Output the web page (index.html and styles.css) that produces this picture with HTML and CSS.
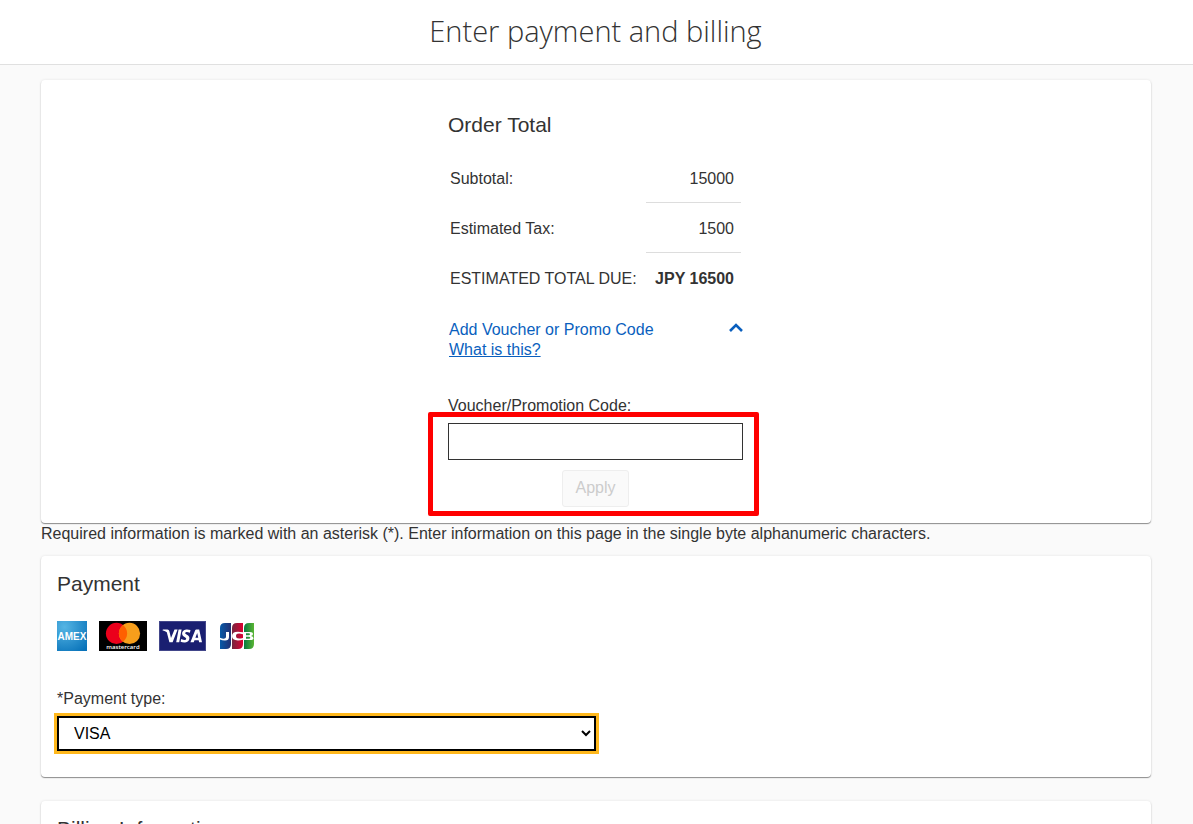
FILE: index.html
```html
<!DOCTYPE html>
<html lang="en">
<head>
<meta charset="utf-8">
<meta name="viewport" content="width=device-width, initial-scale=1">
<title>Enter payment and billing</title>
<link rel="stylesheet" href="styles.css">
</head>
<body>
<header class="page-header">
  <h1 class="page-title">Enter payment and billing</h1>
</header>
<main class="content">
  <section class="card order">
    <div class="order-column">
      <h2 class="heading">Order Total</h2>
      <table class="totals">
        <tbody>
          <tr><th scope="row">Subtotal:</th><td>15000</td></tr>
          <tr><th scope="row">Estimated Tax:</th><td>1500</td></tr>
          <tr class="due"><th scope="row">ESTIMATED TOTAL DUE:</th><td>JPY 16500</td></tr>
        </tbody>
      </table>
      <button class="voucher-toggle" type="button" aria-expanded="true">
        <span>Add Voucher or Promo Code</span>
        <svg class="chevron" width="14" height="9" viewBox="0 0 14 9" aria-hidden="true"><path d="M1 8 L7 2 L13 8" fill="none" stroke="#0a5fbe" stroke-width="2.6"/></svg>
      </button>
      <a class="help-link" href="#">What is this?</a>
      <label class="voucher-label" for="voucher">Voucher/Promotion Code:</label>
      <div class="voucher-entry">
        <input class="voucher-input" id="voucher" type="text">
        <button class="apply" type="button" disabled>Apply</button>
      </div>
    </div>
  </section>
  <p class="note">Required information is marked with an asterisk (*). Enter information on this page in the single byte alphanumeric characters.</p>
  <section class="card payment">
    <h2 class="heading">Payment</h2>
    <div class="brands">
      <svg width="30" height="30" viewBox="0 0 30 30" role="img" aria-label="American Express">
        <defs><radialGradient id="amex" cx=".25" cy=".2" r="1"><stop offset="0" stop-color="#55b5e4"/><stop offset="1" stop-color="#0872b9"/></radialGradient></defs>
        <rect width="30" height="30" fill="url(#amex)"/>
        <text class="amex-text" x="15" y="19" text-anchor="middle">AMEX</text>
      </svg>
      <svg width="48" height="30" viewBox="0 0 48 30" role="img" aria-label="Mastercard">
        <rect width="48" height="30"/>
        <circle cx="17.5" cy="12.4" r="10.6" fill="#eb001b"/>
        <circle cx="30.5" cy="12.4" r="10.6" fill="#f79e1b"/>
        <path d="M24 4 A10.6 10.6 0 0 1 24 20.8 A10.6 10.6 0 0 1 24 4Z" fill="#ff5f00"/>
        <text class="mc-text" x="24" y="28" text-anchor="middle">mastercard</text>
      </svg>
      <svg width="47" height="30" viewBox="0 0 47 30" role="img" aria-label="Visa">
        <rect x=".5" y=".5" width="46" height="29" fill="#1a1f71" stroke="#42468a"/>
        <path d="M4 8.5 H8.5 Q10 8.5 10.3 10 L12 17 L15.5 8.5 H18.6 L13.6 21.3 H10.4 L7.8 11.3 Q6.5 10 3.4 9.2Z" fill="#fff"/>
        <path d="M19.6 8.5 H22.6 L20.2 21.3 H17.2Z" fill="#fff"/>
        <path d="M31.5 9.1 L30.9 11.7 Q26.3 10.2 26.2 12.3 C26.2 13.6 30.6 13.9 30.4 17.2 C30.2 21.9 24.8 22 21.6 20.8 L22.2 18.1 Q27 20 27.2 17.8 C27.3 16.2 23 15.9 23.1 12.6 C23.3 8.3 28.1 7.8 31.5 9.1Z" fill="#fff"/>
        <path fill-rule="evenodd" d="M37.3 8.5 H40.2 L43 21.3 H40.1 L39.7 19.2 H35.5 L34.7 21.3 H31.4 L36.2 9.3 Q36.5 8.5 37.3 8.5Z M38.2 12 L36.4 16.8 H39.2Z" fill="#fff"/>
      </svg>
      <svg width="38" height="30" viewBox="-1 0 38 30" role="img" aria-label="JCB">
        <defs>
          <linearGradient id="jb"><stop offset="0" stop-color="#075aa8"/><stop offset="1" stop-color="#222f72"/></linearGradient>
          <linearGradient id="jr"><stop offset="0" stop-color="#74273f"/><stop offset="1" stop-color="#dc0032"/></linearGradient>
          <linearGradient id="jg"><stop offset="0" stop-color="#087a42"/><stop offset="1" stop-color="#5ab532"/></linearGradient>
        </defs>
        <path d="M6 2 H12 V23 Q12 28 7 28 H1 V7 Q1 2 6 2Z" fill="url(#jb)"/>
        <path d="M18 2 H24 V23 Q24 28 19 28 H13 V7 Q13 2 18 2Z" fill="url(#jr)"/>
        <path d="M30 2 H35 V23 Q35 28 30 28 H25 V7 Q25 2 30 2Z" fill="url(#jg)"/>
        <path d="M7 11 H10 V16 Q10 19.5 6 19.5 Q3 19.5 1 18.5 V16.8 Q4 18 5.5 17.6 Q7 17.3 7 15.8Z" fill="#fff"/>
        <path d="M24 11.3 V13.2 Q17 11.3 17 15 Q17 18.8 24 16.9 V18.8 Q13 21 13 15 Q13 9.2 24 11.3Z" fill="#fff"/>
        <path fill-rule="evenodd" d="M25 11 H31 Q34 11 34 13 Q34 14.7 32 15 Q34.5 15.3 34.5 17.2 Q34.5 19 31.5 19 H25Z M27 12.3 V14.3 H30 Q31 14.3 31 13.3 Q31 12.3 30 12.3Z M27 15.7 V17.8 H30 Q31.3 17.8 31.3 16.7 Q31.3 15.7 30 15.7Z" fill="#fff"/>
      </svg>
    </div>
    <label class="type-label" for="payment-type">*Payment type:</label>
    <select class="type-select" id="payment-type"><option>VISA</option></select>
  </section>
  <section class="card billing">
    <h2 class="heading">Billing Information</h2>
  </section>
</main>
</body>
</html>
```
FILE: styles.css
```css
* { box-sizing: border-box; }
html { overflow: hidden; }
body {
  margin: 0;
  height: 100vh;
  overflow: hidden;
  background: #fafafa;
  color: #333;
  font: 16px/20px "Liberation Sans", Arial, sans-serif;
}
.page-header {
  padding: 11px 18px 13px 16px;
  background: #fff;
  border-bottom: 1px solid #e0e0e0;
}
.page-title {
  margin: 0;
  font: 300 29px/40px "Open Sans", sans-serif;
  text-align: center;
}
.content { padding: 15px 42px 0 41px; }
.card {
  padding: 16px;
  background: #fff;
  border-radius: 4px;
  box-shadow: 0 1px 1px rgba(0, 0, 0, .42), 0 0 3px rgba(0, 0, 0, .09);
}
.heading {
  margin: 0;
  font-size: 21px;
  font-weight: 400;
  line-height: 24px;
}
.order { padding: 33px 17px 16px 16px; }
.order-column {
  display: flex;
  flex-direction: column;
  align-items: flex-start;
  width: 295px;
  margin: 0 auto;
}
.totals {
  width: 100%;
  margin-top: 16px;
  border-spacing: 2px;
}
.totals th, .totals td {
  height: 48px;
  padding: 0;
  font-weight: 400;
  text-align: left;
  white-space: nowrap;
}
.totals td {
  width: 95px;
  padding-right: 7px;
  border-bottom: 1px solid #ddd;
  text-align: right;
}
.totals .due td {
  border-bottom: 0;
  font-weight: 700;
}
.voucher-toggle {
  display: flex;
  justify-content: space-between;
  width: 100%;
  margin-top: 15px;
  padding: 0 0 0 1px;
  border: 0;
  background: none;
  color: #0a5fbe;
  font: inherit;
}
.chevron { margin-top: 3px; }
.help-link {
  padding-left: 1px;
  color: #0a5fbe;
}
.voucher-label { margin-top: 36px; }
.voucher-entry {
  position: relative;
  display: flex;
  flex-direction: column;
  align-items: center;
  gap: 10px;
  width: 100%;
  padding-top: 7px;
}
.voucher-entry::after {
  content: "";
  position: absolute;
  inset: -4px -16px -9px -20px;
  border: 5px solid #f00;
  border-radius: 2px;
  pointer-events: none;
}
.voucher-input {
  width: 100%;
  height: 37px;
  padding: 0 8px;
  border: 1px solid #333;
  border-radius: 0;
  font: inherit;
}
.apply {
  height: 37px;
  padding: 0 12px 2px;
  border: 1px solid #eee;
  border-radius: 3px;
  background: #fafafa;
  color: #ccc;
  font: inherit;
}
.note { margin: 1px 0 12px; }
.brands {
  display: flex;
  gap: 12px;
  margin: 25px 0 38px;
}
.amex-text {
  fill: #fff;
  font-size: 10px;
  font-weight: 700;
}
.mc-text {
  fill: #fff;
  font: 600 6px "Open Sans", sans-serif;
}
.type-label { display: block; }
.type-select {
  display: block;
  width: 50%;
  height: 35px;
  margin: 7px 0 10px;
  padding: 0 1px 0 11px;
  border: 2px solid #000;
  border-radius: 0;
  outline: 3px solid #ffb81c;
  background: #fff;
  color: #000;
  font: inherit;
}
.billing { margin-top: 24px; }
```
